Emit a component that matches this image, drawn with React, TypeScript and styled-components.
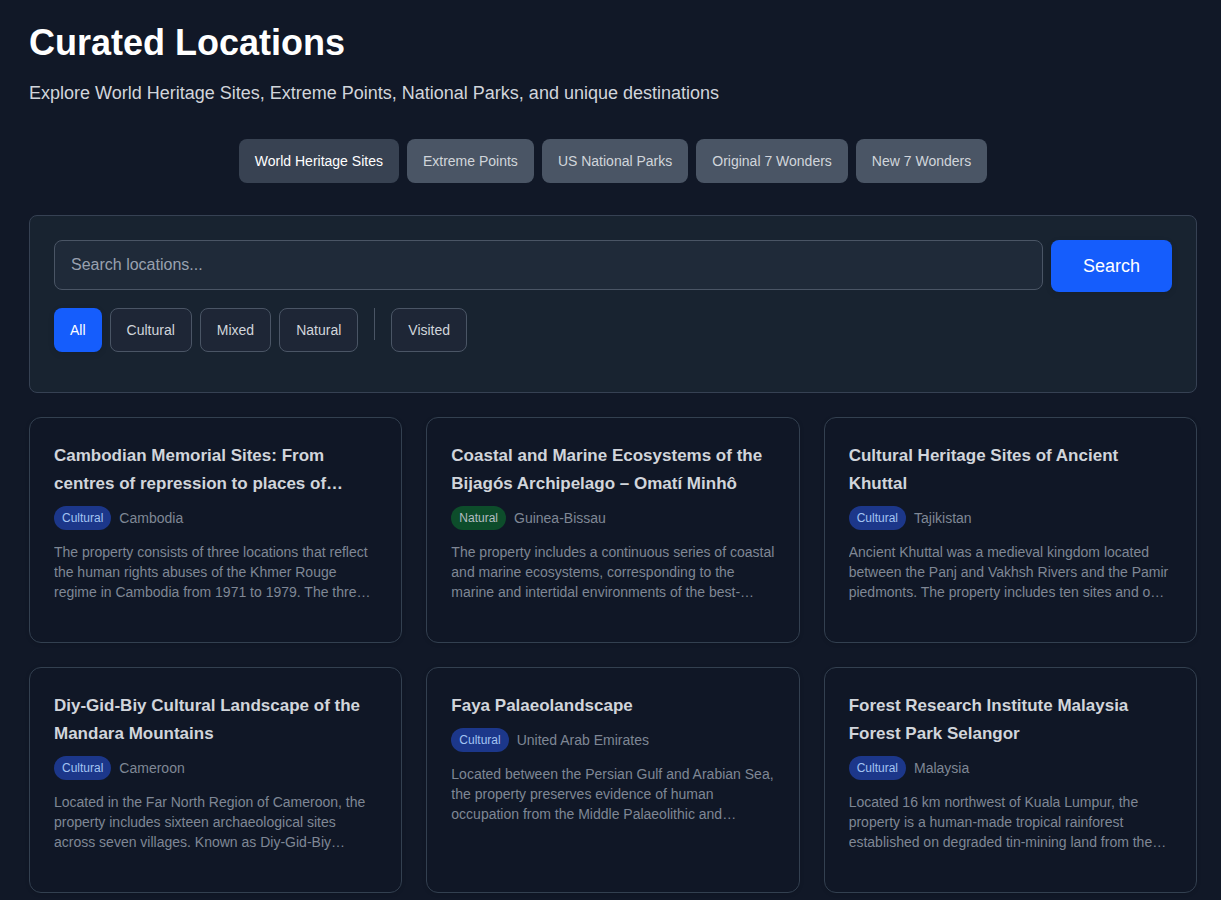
import React, { useState } from "react";
import styled, { createGlobalStyle } from "styled-components";

const GlobalStyle = createGlobalStyle`
  * { box-sizing: border-box; }
  body {
    margin: 0;
    background: #111827;
    color: #d1d5db;
    font-family: "Liberation Sans", Arial, Helvetica, sans-serif;
  }
  h1, h2, p { margin: 0; }
  button, input { font-family: inherit; }
`;

const Page = styled.main`
  padding: 20px 24px 24px 29px;
`;

const PageTitle = styled.h1`
  font-size: 36px;
  line-height: 45px;
  font-weight: 700;
  color: #ffffff;
`;

const Subtitle = styled.p`
  margin-top: 14px;
  font-size: 18px;
  line-height: 28px;
  color: #d1d5db;
`;

const Tabs = styled.nav`
  display: flex;
  flex-wrap: wrap;
  justify-content: center;
  gap: 8px;
  margin: 32px 0;
`;

const Tab = styled.button<{ $active: boolean }>`
  height: 44px;
  padding: 0 16px;
  border: 0;
  border-radius: 8px;
  background: ${(p) => (p.$active ? "#384252" : "#4a5565")};
  color: ${(p) => (p.$active ? "#ffffff" : "#d1d5db")};
  font-size: 14px;
  line-height: 20px;
  cursor: pointer;
`;

const SearchPanel = styled.section`
  padding: 24px 24px 40px;
  border: 1px solid #364153;
  border-radius: 8px;
  background: #182330;
`;

const SearchForm = styled.form`
  display: flex;
  align-items: flex-start;
  gap: 8px;
`;

const SearchInput = styled.input`
  flex: 1;
  min-width: 0;
  height: 50px;
  padding: 0 16px;
  border: 1px solid #4a5565;
  border-radius: 8px;
  background: #1f2a39;
  color: #ffffff;
  font-size: 16px;
  &::placeholder { color: #99a1af; opacity: 1; }
`;

const SearchButton = styled.button`
  height: 52px;
  padding: 0 32px;
  border: 0;
  border-radius: 8px;
  background: #155dfc;
  box-shadow: 0 2px 6px rgba(0, 0, 0, 0.1);
  color: #ffffff;
  font-size: 18px;
  line-height: 28px;
  cursor: pointer;
`;

const Filters = styled.div`
  display: flex;
  flex-wrap: wrap;
  gap: 8px;
  margin-top: 16px;
`;

const FilterButton = styled.button<{ $active: boolean }>`
  height: 44px;
  padding: 0 16px;
  border: ${(p) => (p.$active ? "0" : "1px solid #4a5565")};
  border-radius: 8px;
  background: ${(p) => (p.$active ? "#155dfc" : "#1e2636")};
  box-shadow: ${(p) => (p.$active ? "0 2px 6px rgba(0, 0, 0, 0.1)" : "none")};
  color: ${(p) => (p.$active ? "#ffffff" : "#d1d5db")};
  font-size: 14px;
  line-height: 20px;
  cursor: pointer;
`;

const Divider = styled.span`
  width: 1px;
  height: 32px;
  margin: 0 8px;
  background: #4a5565;
`;

const CardGrid = styled.section`
  display: grid;
  grid-template-columns: repeat(3, minmax(0, 1fr));
  gap: 24px;
  margin-top: 24px;
  @media (max-width: 1000px) { grid-template-columns: repeat(2, minmax(0, 1fr)); }
  @media (max-width: 680px) { grid-template-columns: minmax(0, 1fr); }
`;

const Card = styled.article`
  padding: 24px 24px 40px;
  border: 1px solid #334050;
  border-radius: 12px;
  background: #101726;
  box-shadow: 0 1px 4px rgba(0, 0, 0, 0.12);
`;

const Clamp = styled.p<{ $lines: number }>`
  display: -webkit-box;
  overflow: hidden;
  -webkit-box-orient: vertical;
  -webkit-line-clamp: ${(p) => p.$lines};
`;

const CardTitle = styled(Clamp)`
  font-size: 17px;
  line-height: 28px;
  font-weight: 700;
  color: #d1d5db;
`;

const Meta = styled.div`
  display: flex;
  align-items: center;
  gap: 8px;
  margin: 8px 0 12px;
`;

const Badge = styled.span<{ $kind: Kind }>`
  padding: 4px 8px;
  border-radius: 12px;
  background: ${(p) => (p.$kind === "Natural" ? "#0d4d2b" : "#1c378a")};
  color: ${(p) => (p.$kind === "Natural" ? "#b4bdc2" : "#a3c4f3")};
  font-size: 12px;
  line-height: 16px;
`;

const Country = styled.span`
  font-size: 14px;
  line-height: 20px;
  color: #7f8795;
`;

const Description = styled(Clamp)`
  font-size: 14px;
  line-height: 20px;
  color: #7f8795;
`;

type Kind = "Cultural" | "Natural";

interface Site {
  title: string;
  kind: Kind;
  country: string;
  text: string;
}

const collections = [
  "World Heritage Sites",
  "Extreme Points",
  "US National Parks",
  "Original 7 Wonders",
  "New 7 Wonders",
];

const kinds = ["All", "Cultural", "Mixed", "Natural"];

const sites: Site[] = [
  {
    title: "Cambodian Memorial Sites: From centres of repression to places of…",
    kind: "Cultural",
    country: "Cambodia",
    text: "The property consists of three locations that reflect the human rights abuses of the Khmer Rouge regime in Cambodia from 1971 to 1979. The thre…",
  },
  {
    title: "Coastal and Marine Ecosystems of the Bijagós Archipelago – Omatí Minhô",
    kind: "Natural",
    country: "Guinea-Bissau",
    text: "The property includes a continuous series of coastal and marine ecosystems, corresponding to the marine and intertidal environments of the best-…",
  },
  {
    title: "Cultural Heritage Sites of Ancient Khuttal",
    kind: "Cultural",
    country: "Tajikistan",
    text: "Ancient Khuttal was a medieval kingdom located between the Panj and Vakhsh Rivers and the Pamir piedmonts. The property includes ten sites and o…",
  },
  {
    title: "Diy-Gid-Biy Cultural Landscape of the Mandara Mountains",
    kind: "Cultural",
    country: "Cameroon",
    text: "Located in the Far North Region of Cameroon, the property includes sixteen archaeological sites across seven villages. Known as Diy-Gid-Biy…",
  },
  {
    title: "Faya Palaeolandscape",
    kind: "Cultural",
    country: "United Arab Emirates",
    text: "Located between the Persian Gulf and Arabian Sea, the property preserves evidence of human occupation from the Middle Palaeolithic and…",
  },
  {
    title: "Forest Research Institute Malaysia Forest Park Selangor",
    kind: "Cultural",
    country: "Malaysia",
    text: "Located 16 km northwest of Kuala Lumpur, the property is a human-made tropical rainforest established on degraded tin-mining land from the…",
  },
];

export default function App() {
  const [collection, setCollection] = useState(collections[0]);
  const [kind, setKind] = useState("All");
  const [visited, setVisited] = useState(false);

  return (
    <>
      <GlobalStyle />
      <Page>
        <header>
          <PageTitle>Curated Locations</PageTitle>
          <Subtitle>
            Explore World Heritage Sites, Extreme Points, National Parks, and unique destinations
          </Subtitle>
        </header>
        <Tabs>
          {collections.map((name) => (
            <Tab key={name} type="button" $active={name === collection} onClick={() => setCollection(name)}>
              {name}
            </Tab>
          ))}
        </Tabs>
        <SearchPanel>
          <SearchForm onSubmit={(e) => e.preventDefault()}>
            <SearchInput type="text" aria-label="Search locations" placeholder="Search locations..." />
            <SearchButton type="submit">Search</SearchButton>
          </SearchForm>
          <Filters>
            {kinds.map((name) => (
              <FilterButton key={name} type="button" $active={name === kind} onClick={() => setKind(name)}>
                {name}
              </FilterButton>
            ))}
            <Divider />
            <FilterButton type="button" $active={visited} onClick={() => setVisited(!visited)}>
              Visited
            </FilterButton>
          </Filters>
        </SearchPanel>
        <CardGrid>
          {sites.map((site) => (
            <Card key={site.title}>
              <CardTitle as="h2" $lines={2}>{site.title}</CardTitle>
              <Meta>
                <Badge $kind={site.kind}>{site.kind}</Badge>
                <Country>{site.country}</Country>
              </Meta>
              <Description $lines={3}>{site.text}</Description>
            </Card>
          ))}
        </CardGrid>
      </Page>
    </>
  );
}
